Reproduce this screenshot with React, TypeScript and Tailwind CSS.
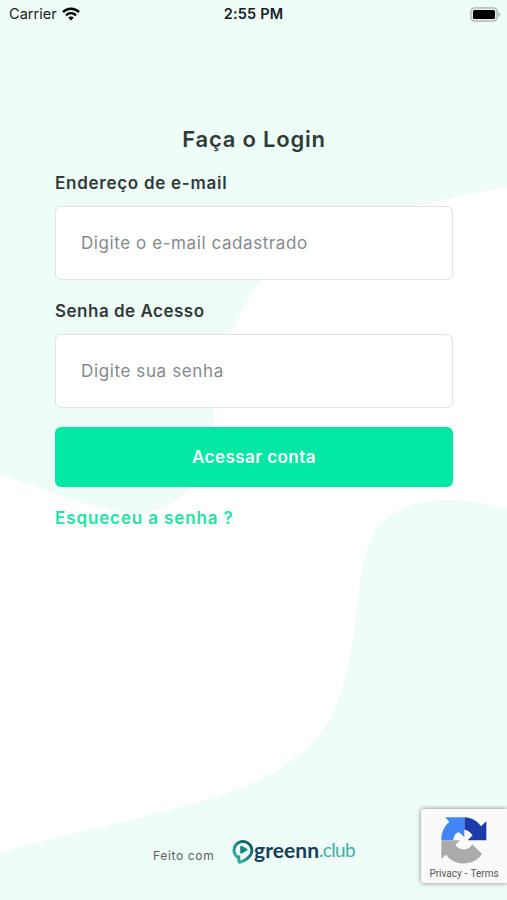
import { useState } from "react"
import type { FormEvent } from "react"

export default function App() {
  return (
    <div className="relative isolate flex h-[900px] w-full flex-col overflow-hidden bg-[#effdf9] font-['Inter',sans-serif] text-[#303b39]">
      <Background />
      <StatusBar />
      <main className="px-[55px] pt-[95px]">
        <LoginForm />
      </main>
      <Footer />
      <RecaptchaBadge />
    </div>
  )
}

function StatusBar() {
  return (
    <header className="grid h-7 grid-cols-3 items-center pl-[9px] pr-[6px] text-[14.5px] text-[#17201e]">
      <div className="flex items-center gap-[5px]">
        <span className="tracking-[0.05px]">Carrier</span>
        <WifiIcon />
      </div>
      <span className="-ml-[3px] text-center text-[14.5px] font-semibold tracking-[0.15px]">2:55 PM</span>
      <div className="flex justify-end">
        <BatteryIcon />
      </div>
    </header>
  )
}

function LoginForm() {
  const [email, setEmail] = useState("")
  const [password, setPassword] = useState("")

  const handleSubmit = (e: FormEvent) => {
    e.preventDefault()
  }

  return (
    <form className="flex w-[398px] flex-col" onSubmit={handleSubmit}>
      <h1 className="text-center text-[22px] font-semibold leading-8 tracking-[0.8px]">Faça o Login</h1>

      <label htmlFor="email" className="mt-4 text-[17px] font-semibold leading-6 tracking-[0.73px]">
        Endereço de e-mail
      </label>
      <input
        id="email"
        type="email"
        value={email}
        onChange={(e) => setEmail(e.target.value)}
        placeholder="Digite o e-mail cadastrado"
        className="mt-[11px] h-[74px] rounded-md border-[1.5px] border-[#dfe3e2] bg-white px-[25px] text-[17px] tracking-[0.58px] outline-none placeholder:text-[#85898d]"
      />

      <label htmlFor="password" className="mt-[19px] text-[17px] font-semibold leading-6 tracking-[0.5px]">
        Senha de Acesso
      </label>
      <input
        id="password"
        type="password"
        value={password}
        onChange={(e) => setPassword(e.target.value)}
        placeholder="Digite sua senha"
        className="mt-[11px] h-[74px] rounded-md border-[1.5px] border-[#dfe3e2] bg-white px-[25px] text-[17px] tracking-[0.62px] outline-none placeholder:text-[#85898d]"
      />

      <button
        type="submit"
        className="mt-[19px] h-[60px] rounded-md bg-[#02e7a3] pt-px text-[17px] font-semibold tracking-[0.45px] text-white"
      >
        Acessar conta
      </button>
      <a href="#" className="mt-[19px] self-start text-[17px] font-semibold leading-6 tracking-[0.88px] text-[#1ee3a4]">
        Esqueceu a senha ?
      </a>
    </form>
  )
}

function Footer() {
  return (
    <footer className="mt-auto flex h-[64px] items-start pl-[153px]">
      <span className="mt-[10px] w-[79px] text-[12px] leading-5 tracking-[0.65px] text-[#59615f]">Feito com</span>
      <GreennLogo />
    </footer>
  )
}

function GreennLogo() {
  return (
    <div className="flex items-start">
      <svg className="mt-[2px]" width="22" height="28" viewBox="0 0 22 28" fill="none">
        <defs>
          <linearGradient id="ring" x1="3" y1="22" x2="20" y2="6" gradientUnits="userSpaceOnUse">
            <stop stopColor="#30b6a7" />
            <stop offset="1" stopColor="#0b5362" />
          </linearGradient>
        </defs>
        <path
          d="M6.2 19.9A8.9 8.9 0 1 1 18.4 17.2C16.2 20.3 12.5 23 8.2 24.2C7 24.5 6.7 23.7 6.8 22.6V18.8"
          stroke="url(#ring)"
          strokeWidth="2.9"
          strokeLinecap="round"
          strokeLinejoin="round"
        />
        <path d="M8.2 8.8C8.2 7.9 9 7.5 9.8 7.9L15 10.8C15.7 11.3 15.7 12.1 15 12.6L9.8 15.5C9 15.9 8.2 15.5 8.2 14.6Z" fill="#16897f" />
      </svg>
      <span className="font-['Lato',sans-serif] text-[21px] font-bold leading-7 tracking-[0.05px] text-[#143f56]">greenn</span>
      <span className="font-['Lato',sans-serif] text-[19px] leading-7 tracking-[-0.7px] text-[#3eafa5]">.club</span>
    </div>
  )
}

function RecaptchaBadge() {
  return (
    <aside className="absolute right-0 top-[809px] flex h-[74px] w-[86px] flex-col items-center rounded-l-[3px] bg-[#fafafa] pt-2 shadow-[0_0_5px_#808080]">
      <svg width="46" height="48" viewBox="27 15 138 144">
        <path d="M97 16C118 17 135 26 147 43L163 28V85H107L122 70C115 60 108 54 97 53Z" fill="#1c3aa9" />
        <path d="M97 16H40L52 30C36 42 28 62 28 85H64C65 71 71 63 81 61L97 75Z" fill="#4285f4" />
        <path d="M28 85H84L70 99C80 115 109 119 121 97L150 126C127 161 70 166 42 128L28 140Z" fill="#ababab" />
      </svg>
      <div className="mt-[1px] flex gap-[3px] font-['Roboto',sans-serif] text-[10px] leading-4 text-[#555]">
        <a href="#">Privacy</a>
        <span>-</span>
        <a href="#">Terms</a>
      </div>
    </aside>
  )
}

function Background() {
  return (
    <svg className="absolute inset-0 -z-10" width="507" height="900" viewBox="0 0 507 900" fill="none">
      <path
        d="M507 187C474 193 447 198 420 205C350 224 286 246 258 284C238 313 226 340 219 372C212 408 217 435 204 465C194 492 168 512 136 513C88 511 45 487 0 475V853C80 829 151 818 221 795C281 776 326 745 342 690C361 628 354 576 372 538C393 495 453 493 507 509Z"
        fill="#fff"
      />
    </svg>
  )
}

function WifiIcon() {
  return (
    <svg width="18" height="14" viewBox="0 0 18 14" fill="none" stroke="#000" strokeWidth="2.4">
      <path d="M1 5.1C5.5.6 12.5.6 17 5.1M4 8.3C6.9 5.5 11.1 5.5 14 8.3" />
      <path d="M6.2 10.6C7.8 9.1 10.2 9.1 11.8 10.6L9 13.5Z" fill="#000" stroke="none" />
    </svg>
  )
}

function BatteryIcon() {
  return (
    <svg width="31" height="15" viewBox="0 0 31 15" fill="none">
      <rect x=".8" y=".8" width="26.4" height="13.4" rx="4" fill="#e3eeea" stroke="#a9b4b0" strokeWidth="1.3" />
      <rect x="3" y="3" width="22" height="9" rx="1.6" fill="#000" />
      <path d="M28.5 5C30.7 5.6 30.7 9.3 28.5 10Z" fill="#a9b4b0" />
    </svg>
  )
}
